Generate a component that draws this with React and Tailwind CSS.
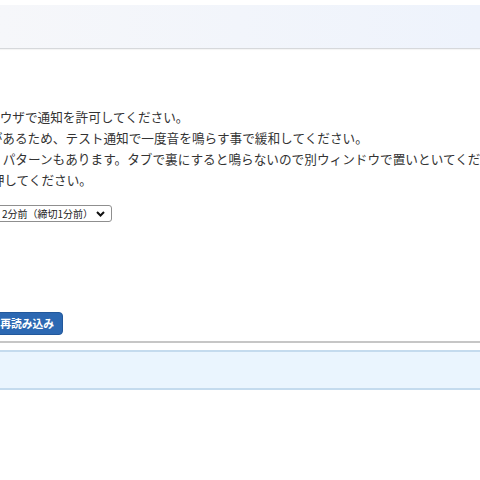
import React from "react";

const lines = [
  { text: "ラウザで通知を許可してください。", ml: "-ml-[13px]" },
  { text: "合があるため、テスト通知で一度音を鳴らす事で緩和してください。", ml: "-ml-[23px]" },
  { text: "、パターンもあります。タブで裏にすると鳴らないので別ウィンドウで置いといてください。", ml: "-ml-[10px]" },
  { text: "を押してください。", ml: "-ml-[21px]" },
];

const App = () => {
  return (
    <div className="w-[480px] h-[480px] overflow-hidden bg-white text-[#333] font-['Noto_Sans_CJK_JP','Noto_Sans',sans-serif]">
      <div className="h-[5px]" />
      <header className="h-[44px] bg-gradient-to-r from-[#f6f7fa] to-[#eef3fc] border-b border-[#d6d8db] shadow-[0_1px_1px_rgba(0,0,0,0.04)]" />

      <main className="h-[294px] border-b-2 border-[#c6c6c6] pt-[57px] flex flex-col">
        <div className="text-[12.65px] leading-[21px] whitespace-nowrap">
          {lines.map((l) => (
            <p key={l.text} className={l.ml}>
              {l.text}
            </p>
          ))}
        </div>

        <div className="mt-[15px] -ml-[4px] flex">
          <div className="flex items-center h-[17px] w-[116px] border border-[#8f8f8f] rounded-[3px] bg-white pl-[5px] pr-[6px] text-[10px] text-[#222]">
            <span className="flex-1 whitespace-nowrap">2分前（締切1分前）</span>
            <svg width="9" height="6" viewBox="0 0 9 6" fill="none">
              <path d="M1 1l3.5 3.5L8 1" stroke="#111" strokeWidth="2" />
            </svg>
          </div>
        </div>

        <div className="mt-[90px] -ml-[41px] flex">
          <button className="h-[23px] px-[8px] rounded-[4px] bg-[#2c68b2] border border-[#22589b] text-white font-bold text-[10.8px] whitespace-nowrap">
            ページ再読み込み
          </button>
        </div>
      </main>

      <div className="h-[7px]" />
      <section className="h-[40px] bg-[#eaf5fe] border-y-2 border-[#c4dbee]" />
    </div>
  );
};

export default App;
